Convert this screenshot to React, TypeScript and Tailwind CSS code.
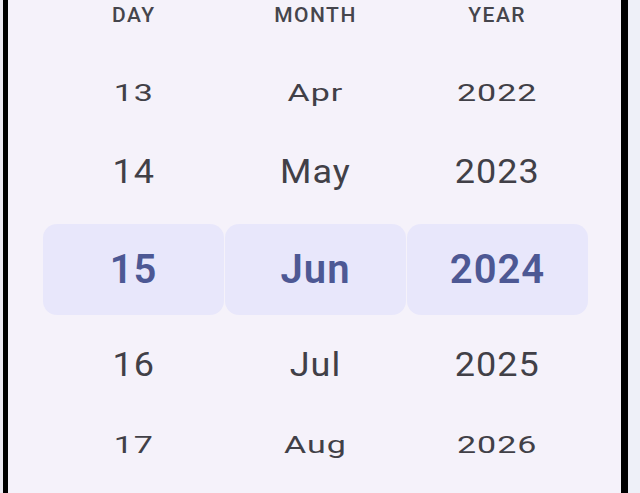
import React from "react";

const rows = [
  { d: "13", m: "Apr", y: "2022", kind: "far" },
  { d: "14", m: "May", y: "2023", kind: "near" },
  { d: "15", m: "Jun", y: "2024", kind: "sel" },
  { d: "16", m: "Jul", y: "2025", kind: "near" },
  { d: "17", m: "Aug", y: "2026", kind: "far" },
];

function Row({ d, m, y, kind }: { d: string; m: string; y: string; kind: string }) {
  if (kind === "sel") {
    return (
      <div className="grid h-[91px] grid-cols-3 gap-[1px]">
        {[d, m, y].map((t) => (
          <div
            key={t}
            className="flex items-center justify-center rounded-[14px] bg-[#e8e7fb] text-[40px] font-semibold tracking-[1px] text-[#4d5894]"
          >
            {t}
          </div>
        ))}
      </div>
    );
  }
  const cls =
    kind === "far"
      ? "text-[34px] tracking-[1px] scale-y-[0.7]"
      : "text-[36px] tracking-[1px] scale-y-[0.9]";
  return (
    <div className="grid h-[56px] grid-cols-3">
      {[d, m, y].map((t) => (
        <div key={t} className="flex items-center justify-center">
          <span className={`${cls} text-[#414047]`}>{t}</span>
        </div>
      ))}
    </div>
  );
}

export default function App() {
  return (
    <div
      className="flex h-[493px] w-[640px] overflow-hidden bg-[#f3f2f8]"
      style={{ fontFamily: "Roboto, 'Liberation Sans', sans-serif" }}
    >
      <div className="w-[3px] bg-[#eceaf2]" />
      <div className="w-[5px] bg-black" />
      <div className="flex flex-1 flex-col bg-[#f5f2fa] pl-[35px] pr-[33px]">
        <div className="grid h-[28px] grid-cols-3 text-[21px] font-medium tracking-[1.5px] text-[#45454c]">
          <div className="flex items-center justify-center">DAY</div>
          <div className="flex items-center justify-center">MONTH</div>
          <div className="flex items-center justify-center">YEAR</div>
        </div>
        <div className="mt-[36px] flex flex-col">
          <Row {...rows[0]} />
          <div className="h-[24px]" />
          <Row {...rows[1]} />
          <div className="h-[24px]" />
          <Row {...rows[2]} />
          <div className="h-[22px]" />
          <Row {...rows[3]} />
          <div className="h-[23px]" />
          <Row {...rows[4]} />
        </div>
      </div>
      <div className="w-[7px] bg-black" />
      <div className="w-[12px] bg-[#eef0f8]" />
    </div>
  );
}
